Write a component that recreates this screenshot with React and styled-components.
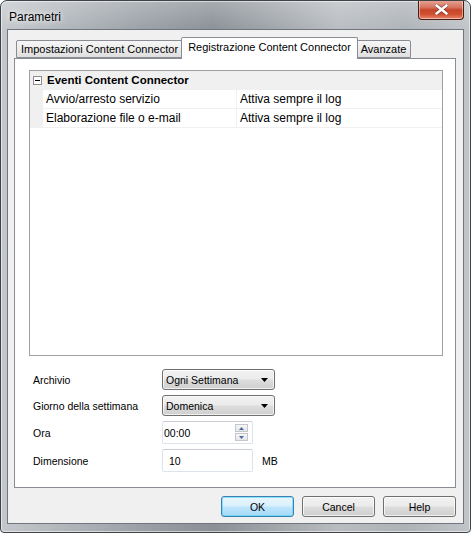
import React from "react";
import styled, { createGlobalStyle } from "styled-components";

const Global = createGlobalStyle`
  html, body { margin: 0; padding: 0; background: #ffffff; }
  body { font-family: "Liberation Sans", Arial, sans-serif; font-size: 10.5px; color: #000; }
`;

const Window = styled.div`
  box-sizing: border-box;
  width: 471px;
  height: 533px;
  border: 1px solid #3f4347;
  border-radius: 7px 7px 4px 4px;
  background:
    linear-gradient(to bottom, rgba(255,255,255,0.25), rgba(255,255,255,0) 30px),
    linear-gradient(to right, #c4c8cc 0%, #b3b8bd 12%, #9aa0a6 30%, #8a9096 45%, #a0a5aa 58%, #b9bdc1 72%, #aeb3b8 86%, #c0c4c8 100%);
  box-shadow: inset 0 0 0 1px rgba(255,255,255,0.55);
  display: flex;
  flex-direction: column;
  overflow: hidden;
`;

const TitleBar = styled.div`
  height: 28px;
  display: flex;
  align-items: flex-start;
  justify-content: space-between;
  padding-left: 8px;
`;

const Title = styled.div`
  font-family: "Liberation Sans", Arial, sans-serif;
  font-size: 12px;
  line-height: 12px;
  padding-top: 10px;
  color: #000;
  text-shadow: 0 0 8px rgba(255,255,255,0.9), 0 0 4px rgba(255,255,255,0.8);
`;

const CloseButton = styled.div`
  box-sizing: border-box;
  width: 46px;
  height: 20px;
  margin-right: 6px;
  margin-top: -1px;
  border: 1px solid #4a1c12;
  border-top: none;
  border-radius: 0 0 4px 4px;
  background: linear-gradient(to bottom, #e9a99a 0%, #d4715c 40%, #c7452b 52%, #d0502f 75%, #e9856c 100%);
  box-shadow: inset 0 0 0 1px rgba(255,255,255,0.45);
  display: flex;
  align-items: center;
  justify-content: center;
`;

const Client = styled.div`
  box-sizing: border-box;
  margin: 0 6px;
  height: 495px;
  border: 1px solid #6f767e;
  background: #f0f0f0;
  padding: 7px 7px 6px 6px;
  display: flex;
  flex-direction: column;
`;

const TabStrip = styled.div`
  height: 21px;
  display: flex;
  align-items: flex-end;
  padding-left: 2px;
  position: relative;
  z-index: 1;
`;

const Tab = styled.div`
  box-sizing: border-box;
  width: ${(p) => p.$w}px;
  height: ${(p) => (p.$active ? 22 : 18)}px;
  margin: ${(p) => (p.$active ? "0 -2px -1px -2px" : "0")};
  border: 1px solid #898c95;
  border-bottom: ${(p) => (p.$active ? "none" : "1px solid #898c95")};
  border-radius: 2px 2px 0 0;
  background: ${(p) =>
    p.$active ? "#ffffff" : "linear-gradient(to bottom, #f6f6f6 0%, #ececec 50%, #dfdfdf 100%)"};
  position: relative;
  z-index: ${(p) => (p.$active ? 2 : 1)};
  display: flex;
  align-items: center;
  justify-content: center;
  padding-bottom: ${(p) => (p.$active ? 4 : 0)}px;
  white-space: nowrap;
  font-size: 11px;
`;

const Panel = styled.div`
  box-sizing: border-box;
  height: 430px;
  border: 1px solid #898c95;
  background: #ffffff;
  padding: 11px 12px 0 14px;
  display: flex;
  flex-direction: column;
`;

const PropGrid = styled.div`
  box-sizing: border-box;
  height: 286px;
  border: 1px solid #a0a0a0;
  background: #ffffff;
  font-size: 12px;
`;

const CategoryRow = styled.div`
  height: 18px;
  background: #f0f0f0;
  display: flex;
  align-items: center;
  padding-left: 3px;
  border-bottom: 1px solid #f0f0f0;
`;

const Expander = styled.div`
  box-sizing: border-box;
  width: 9px;
  height: 9px;
  border: 1px solid #8e8f8f;
  background: #ffffff;
  display: flex;
  align-items: center;
  justify-content: center;
  margin-right: 5px;
  &::after {
    content: "";
    width: 5px;
    height: 1px;
    background: #000;
  }
`;

const CategoryText = styled.div`
  font-weight: bold;
  font-size: 11.5px;
`;

const PropRow = styled.div`
  height: 19px;
  display: flex;
`;

const Margin = styled.div`
  width: 13px;
  background: #f0f0f0;
`;

const Cell = styled.div`
  box-sizing: border-box;
  width: ${(p) => p.$w};
  flex: ${(p) => (p.$grow ? 1 : "none")};
  border-bottom: 1px solid #f0f0f0;
  border-right: ${(p) => (p.$divider ? "1px solid #f0f0f0" : "none")};
  padding-left: ${(p) => p.$pad}px;
  display: flex;
  align-items: center;
  white-space: nowrap;
  overflow: hidden;
`;

const Form = styled.div`
  margin-top: 13px;
  display: grid;
  grid-template-columns: 129px auto;
  grid-template-rows: 21px 21px 23px 23px;
  row-gap: 5px;
  padding-left: 4px;
`;

const Label = styled.div`
  display: flex;
  align-items: center;
  color: #000;
`;

const ControlCell = styled.div`
  display: flex;
  align-items: center;
`;

const Combo = styled.div`
  box-sizing: border-box;
  width: 113px;
  height: 21px;
  border: 1px solid #707070;
  border-radius: 3px;
  background: linear-gradient(to bottom, #f2f2f2 0%, #ebebeb 48%, #dddddd 52%, #cfcfcf 100%);
  box-shadow: inset 0 0 0 1px rgba(255,255,255,0.7);
  display: flex;
  align-items: center;
  justify-content: space-between;
  padding: 0 5px 0 3px;
`;

const TextField = styled.div`
  box-sizing: border-box;
  width: 91px;
  height: 23px;
  border: 1px solid #dde3ea;
  border-top-color: #c9ced6;
  border-radius: 2px;
  background: #ffffff;
  display: flex;
  align-items: center;
  justify-content: space-between;
  padding: 0 4px 0 ${(p) => p.$pad}px;
  margin-right: 9px;
`;

const Spinner = styled.div`
  display: flex;
  flex-direction: column;
  gap: 1px;
`;

const SpinButton = styled.div`
  box-sizing: border-box;
  width: 13px;
  height: 8px;
  border: 1px solid #c3c7cc;
  background: linear-gradient(to bottom, #f7f7f7, #e4e6e9);
  display: flex;
  align-items: center;
  justify-content: center;
`;

const Unit = styled.div`
  color: #000;
`;

const ButtonRow = styled.div`
  margin-top: 8px;
  display: flex;
  justify-content: flex-end;
  gap: 8px;
`;

const Button = styled.div`
  box-sizing: border-box;
  width: 73px;
  height: 21px;
  border: 1px solid ${(p) => (p.$default ? "#3c7fb1" : "#707070")};
  border-radius: 3px;
  background: ${(p) =>
    p.$default
      ? "linear-gradient(to bottom, #eaf6fd 0%, #d9f0fc 48%, #bee6fd 52%, #a7d9f5 100%)"
      : "linear-gradient(to bottom, #f2f2f2 0%, #ebebeb 48%, #dddddd 52%, #cfcfcf 100%)"};
  box-shadow: inset 0 0 0 1px ${(p) => (p.$default ? "rgba(72,216,251,0.6)" : "rgba(255,255,255,0.7)")};
  display: flex;
  align-items: center;
  justify-content: center;
`;

const Arrow = () => (
  <svg width="8" height="4" viewBox="0 0 8 4">
    <path d="M0 0 H7 L3.5 4 Z" fill="#000" />
  </svg>
);

const SpinArrow = ({ up }) => (
  <svg width="5" height="3" viewBox="0 0 5 3">
    <path d={up ? "M0 3 H5 L2.5 0 Z" : "M0 0 H5 L2.5 3 Z"} fill="#4d6a9c" />
  </svg>
);

const CloseGlyph = () => (
  <svg width="13" height="11" viewBox="0 0 13 11">
    <path
      d="M1.5 1.5 L11.5 9.5 M11.5 1.5 L1.5 9.5"
      stroke="#3a1810"
      strokeWidth="4"
      strokeLinecap="round"
      opacity="0.5"
    />
    <path
      d="M1.5 1.5 L11.5 9.5 M11.5 1.5 L1.5 9.5"
      stroke="#ffffff"
      strokeWidth="2.6"
      strokeLinecap="round"
    />
  </svg>
);

const rows = [
  ["Avvio/arresto servizio", "Attiva sempre il log"],
  ["Elaborazione file o e-mail", "Attiva sempre il log"],
];

export default function App() {
  return (
    <>
      <Global />
      <Window>
        <TitleBar>
          <Title>Parametri</Title>
          <CloseButton>
            <CloseGlyph />
          </CloseButton>
        </TitleBar>
        <Client>
          <TabStrip>
            <Tab $w={167}>Impostazioni Content Connector</Tab>
            <Tab $w={177} $active>
              Registrazione Content Connector
            </Tab>
            <Tab $w={55}>Avanzate</Tab>
          </TabStrip>
          <Panel>
            <PropGrid>
              <CategoryRow>
                <Expander />
                <CategoryText>Eventi Content Connector</CategoryText>
              </CategoryRow>
              {rows.map(([k, v]) => (
                <PropRow key={k}>
                  <Margin />
                  <Cell $w="194px" $pad={3} $divider>
                    {k}
                  </Cell>
                  <Cell $grow $pad={3}>
                    {v}
                  </Cell>
                </PropRow>
              ))}
            </PropGrid>
            <Form>
              <Label>Archivio</Label>
              <ControlCell>
                <Combo>
                  <span>Ogni Settimana</span>
                  <Arrow />
                </Combo>
              </ControlCell>
              <Label>Giorno della settimana</Label>
              <ControlCell>
                <Combo>
                  <span>Domenica</span>
                  <Arrow />
                </Combo>
              </ControlCell>
              <Label>Ora</Label>
              <ControlCell>
                <TextField $pad={1}>
                  <span>00:00</span>
                  <Spinner>
                    <SpinButton>
                      <SpinArrow up />
                    </SpinButton>
                    <SpinButton>
                      <SpinArrow />
                    </SpinButton>
                  </Spinner>
                </TextField>
              </ControlCell>
              <Label>Dimensione</Label>
              <ControlCell>
                <TextField $pad={6}>
                  <span>10</span>
                </TextField>
                <Unit>MB</Unit>
              </ControlCell>
            </Form>
          </Panel>
          <ButtonRow>
            <Button $default>OK</Button>
            <Button>Cancel</Button>
            <Button>Help</Button>
          </ButtonRow>
        </Client>
      </Window>
    </>
  );
}
